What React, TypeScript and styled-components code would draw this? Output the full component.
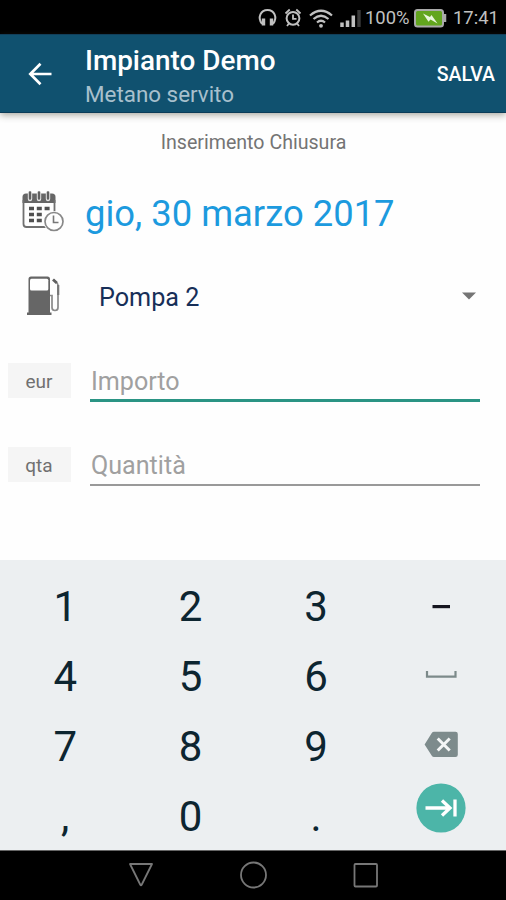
import React from 'react';
import styled, { createGlobalStyle } from 'styled-components';

const GlobalStyle = createGlobalStyle`
  * { box-sizing: border-box; }
  body { margin: 0; background: #fff; font-family: Roboto, "Liberation Sans", sans-serif; }
  button { border: 0; padding: 0; background: none; font: inherit; color: inherit; }
`;

const Screen = styled.div`
  width: 506px;
  height: 900px;
  display: flex;
  flex-direction: column;
  overflow: hidden;
  background: #fefefe;
`;

const StatusBar = styled.div`
  height: 34px;
  background: #000;
  display: flex;
  align-items: center;
  justify-content: flex-end;
  padding: 2px 9px 0 0;
  color: #c0c0c0;
  font-size: 18.4px;
  line-height: 32px;
`;

const StatusIcons = styled.svg`
  width: 107px;
  height: 32px;
  margin-right: 4px;
`;

const Percent = styled.span`
  width: 44px;
  white-space: nowrap;
`;

const Battery = styled.svg`
  width: 33px;
  height: 32px;
  margin: 0 6px 0 5px;
`;

const Clock = styled.span`
  width: 44px;
  white-space: nowrap;
`;

const AppBar = styled.header`
  height: 79px;
  flex: none;
  background: #10516f;
  border-top: 1px solid #123f5a;
  border-bottom: 1px solid #0b3c58;
  box-shadow: 0 2px 7px rgba(60, 60, 40, 0.45);
  display: flex;
  align-items: center;
  padding: 0 11px 0 28px;
  color: #fff;
`;

const BackButton = styled.button`
  width: 24px;
  height: 24px;
  margin-right: 33px;
`;

const Titles = styled.div`
  flex: 1;
  padding-top: 7px;
`;

const Title = styled.h1`
  margin: 0;
  font-size: 27.9px;
  font-weight: 500;
  line-height: 34px;
`;

const Subtitle = styled.div`
  font-size: 22.4px;
  line-height: 33px;
  color: #a8c0cd;
`;

const SaveButton = styled.button`
  font-size: 19.5px;
  font-weight: 500;
  padding-top: 2px;
`;

const Form = styled.main`
  height: 447px;
  flex: none;
`;

const Caption = styled.div`
  height: 58px;
  line-height: 60px;
  text-align: center;
  font-size: 19.6px;
  padding-left: 1px;
  color: #747474;
`;

const Row = styled.div<{ $height: number }>`
  height: ${(p) => p.$height}px;
  display: flex;
  align-items: center;
`;

const RowIcon = styled.svg`
  width: 56px;
  height: 56px;
  margin: 0 14px 0 15px;
  flex: none;
`;

const DateText = styled.div`
  font-size: 36.4px;
  padding-top: 2px;
  color: #1c9ade;
  white-space: nowrap;
`;

const PumpSelect = styled.div`
  flex: 1;
  display: flex;
  align-items: center;
  justify-content: space-between;
  padding: 4px 30px 0 14px;
  font-size: 25.2px;
  color: #172f58;
`;

const Caret = styled.svg`
  width: 14px;
  height: 8px;
  margin-top: -3px;
`;

const Unit = styled.div`
  width: 63px;
  height: 35px;
  line-height: 37px;
  margin: 0 19px 0 8px;
  padding-right: 1px;
  background: #f5f5f5;
  text-align: center;
  font-size: 19px;
  color: #707070;
`;

const Field = styled.div<{ $active?: boolean }>`
  width: 390px;
  height: 43px;
  line-height: 46px;
  padding-left: 1px;
  font-size: 25.1px;
  color: #a0a0a0;
  border-bottom: ${(p) => (p.$active ? '3px solid #2a9484' : '2px solid #999')};
`;

const Keyboard = styled.div`
  height: 290px;
  flex: none;
  background: #eceff1;
  display: grid;
  grid-template-columns: repeat(4, 125.4px);
  grid-template-rows: repeat(4, 70px);
  padding: 11px 0 0 2.5px;
`;

const Key = styled.button`
  display: flex;
  align-items: center;
  justify-content: center;
  font-size: 42px;
  line-height: 70px;
  padding-top: 2px;
  color: #0d2530;
`;

const KeyIcon = styled.svg`
  width: 52px;
  height: 52px;
  margin: -2px 0 0 0;
`;

const NextIcon = styled(KeyIcon)`
  margin-top: -19px;
`;

const NavBar = styled.nav`
  height: 50px;
  flex: none;
  background: #000;
  border-top: 1px solid #666;
  display: flex;
  align-items: center;
  justify-content: center;
  gap: 85px;
  padding-bottom: 1px;
`;

const NavIcon = styled.svg`
  width: 28px;
  height: 28px;
  fill: none;
  stroke: #777;
  stroke-width: 1.8;
  stroke-linejoin: round;
`;

const minusKey = (
  <KeyIcon viewBox="0 0 52 52"><path d="M17.5 26.6h17.5" stroke="#15151f" strokeWidth="3.2" /></KeyIcon>
);
const spaceKey = (
  <KeyIcon viewBox="0 0 52 52"><path d="M12 21v5.7h28.5V21" fill="none" stroke="#7c8a8a" strokeWidth="2.2" /></KeyIcon>
);
const deleteKey = (
  <KeyIcon viewBox="0 0 52 52">
    <path d="M19 11.8h21.5a2.3 2.3 0 0 1 2.3 2.3v20.6a2.3 2.3 0 0 1-2.3 2.3H19q-1.4 0-2.2-1.2L9.6 24.5l7.2-11.5q.8-1.2 2.2-1.2z" fill="#7d8b8c" />
    <path d="M22.7 18.5l12 12M34.7 18.5l-12 12" stroke="#f4f6f6" strokeWidth="3" />
  </KeyIcon>
);
const nextKey = (
  <NextIcon viewBox="0 0 52 52">
    <circle cx="26" cy="26" r="24.6" fill="#4cb5a8" />
    <path d="M10.5 26h24M27 18.5l8 7.5-8 7.5M40 17.5v17" fill="none" stroke="#fff" strokeWidth="3.3" />
  </NextIcon>
);

const keys: { id: string; face: React.ReactNode }[] = [
  { id: '1', face: '1' }, { id: '2', face: '2' }, { id: '3', face: '3' }, { id: 'minus', face: minusKey },
  { id: '4', face: '4' }, { id: '5', face: '5' }, { id: '6', face: '6' }, { id: 'space', face: spaceKey },
  { id: '7', face: '7' }, { id: '8', face: '8' }, { id: '9', face: '9' }, { id: 'delete', face: deleteKey },
  { id: 'comma', face: ',' }, { id: '0', face: '0' }, { id: 'dot', face: '.' }, { id: 'next', face: nextKey },
];

export default function App() {
  return (
    <Screen>
      <GlobalStyle />
      <StatusBar>
        <StatusIcons viewBox="254 2 107 32" fill="none" stroke="#c0c0c0">
          <path d="M262 24c-5-7-1-14 5.5-14s10.5 7 5.5 14" strokeWidth="2" />
          <path d="M263.5 18.5v7M271.5 18.5v7" strokeWidth="3.4" />
          <circle cx="293" cy="18.3" r="6.4" strokeWidth="2" />
          <path d="M293 14.5v4.3h3.5M285.5 13.5l4.2-4M300.5 13.5l-4.2-4M289 23.5l-2 2.5M297 23.5l2 2.5" strokeWidth="1.8" />
          <path d="M310 15.5q11-9.5 22 0M313.5 19q7.5-6.5 15 0M317 22.5q4-3.5 8 0" strokeWidth="2.2" />
          <circle cx="321" cy="25.8" r="1.9" fill="#c0c0c0" stroke="none" />
          <path d="M342 22.5v4.5M347.5 20.5v6.5M353.3 15.5v11.5" strokeWidth="3.5" />
          <path d="M359 10v17" stroke="#3a3a3a" strokeWidth="3.4" />
        </StatusIcons>
        <Percent>100%</Percent>
        <Battery viewBox="0 0 33 32">
          <rect x="1" y="8" width="28" height="16.5" rx="2.5" fill="#62a51e" stroke="#aaa" strokeWidth="2" />
          <path d="M31 12v8" stroke="#aaa" strokeWidth="2.5" />
          <path d="M9 11.5l7 3.5 1.5-2 6 8.5-7-4-2 2.3z" fill="#e9f5dc" />
        </Battery>
        <Clock>17:41</Clock>
      </StatusBar>

      <AppBar>
        <BackButton aria-label="Indietro">
          <svg width="24" height="24" viewBox="0 0 24 24" fill="none" stroke="#fff" strokeWidth="2.7">
            <path d="M23.5 12H2.5M12.5 1.8L2.3 12l10.2 10.2" />
          </svg>
        </BackButton>
        <Titles>
          <Title>Impianto Demo</Title>
          <Subtitle>Metano servito</Subtitle>
        </Titles>
        <SaveButton>SALVA</SaveButton>
      </AppBar>

      <Form>
        <Caption>Inserimento Chiusura</Caption>
        <Row $height={82}>
          <RowIcon viewBox="0.5 2 56 56">
            <path d="M8 21v-6q0-3.500 3.500-3.500h26q3.500 0 3.500 3.500v6z" fill="#666" />
            <path d="M9 18v24q0 3 3 3h25q3 0 3-3V18" fill="none" stroke="#707070" strokeWidth="1.8" />
            <path d="M15.5 11v6M24.5 11v6M33.5 11v6" stroke="#e4e4e4" strokeWidth="4.4" strokeLinecap="round" />
            <path d="M15.5 10.5v6M24.5 10.5v6M33.5 10.5v6" stroke="#606060" strokeWidth="2.4" strokeLinecap="round" />
            <path d="M14.5 26.5h23M14.5 32.5h15M14.5 38.5h15" stroke="#505050" strokeWidth="3.6" strokeDasharray="5 2.8" />
            <circle cx="39.5" cy="39.5" r="10.5" fill="#fefefe" />
            <circle cx="39.5" cy="39.5" r="9" fill="#fefefe" stroke="#888" strokeWidth="1.7" />
            <path d="M39 33.5v7h5" fill="none" stroke="#777" strokeWidth="1.6" />
          </RowIcon>
          <DateText>gio, 30 marzo 2017</DateText>
        </Row>
        <Row $height={84}>
          <RowIcon viewBox="0 -1 56 56">
            <path d="M12 47v-2.5h1.5V11q0-2.5 2.5-2.5h16.5q2.5 0 2.5 2.5v33.5h1.5V47z" fill="#666" />
            <rect x="15" y="10.8" width="18.3" height="11.7" rx="1.5" fill="#fff" />
            <path d="M35 27.5h2v12q0 3 3 3t3-3V18q0-2-1-3l-3.5-3.3" fill="none" stroke="#8a8a8a" strokeWidth="1.7" />
            <path d="M38 11.5l3.8 3.5" stroke="#606060" strokeWidth="2.8" />
            <path d="M43.2 17v10" stroke="#777" strokeWidth="2.2" />
          </RowIcon>
          <PumpSelect>
            Pompa 2
            <Caret viewBox="0 0 14 8"><path d="M0 .5h14L7 7.5z" fill="#757575" /></Caret>
          </PumpSelect>
        </Row>
        <Row $height={86}>
          <Unit>eur</Unit>
          <Field $active>Importo</Field>
        </Row>
        <Row $height={82}>
          <Unit>qta</Unit>
          <Field>Quantità</Field>
        </Row>
      </Form>

      <Keyboard>
        {keys.map((k) => (
          <Key key={k.id} aria-label={k.id}>{k.face}</Key>
        ))}
      </Keyboard>

      <NavBar>
        <NavIcon viewBox="0 0 28 28"><path d="M4 3h22L15.8 23.5q-.8 1.5-1.6 0z" /></NavIcon>
        <NavIcon viewBox="0 0 28 28"><circle cx="14.5" cy="14" r="12.5" /></NavIcon>
        <NavIcon viewBox="0 0 28 28"><rect x="2.5" y="3" width="22.5" height="22.5" rx="1" /></NavIcon>
      </NavBar>
    </Screen>
  );
}
